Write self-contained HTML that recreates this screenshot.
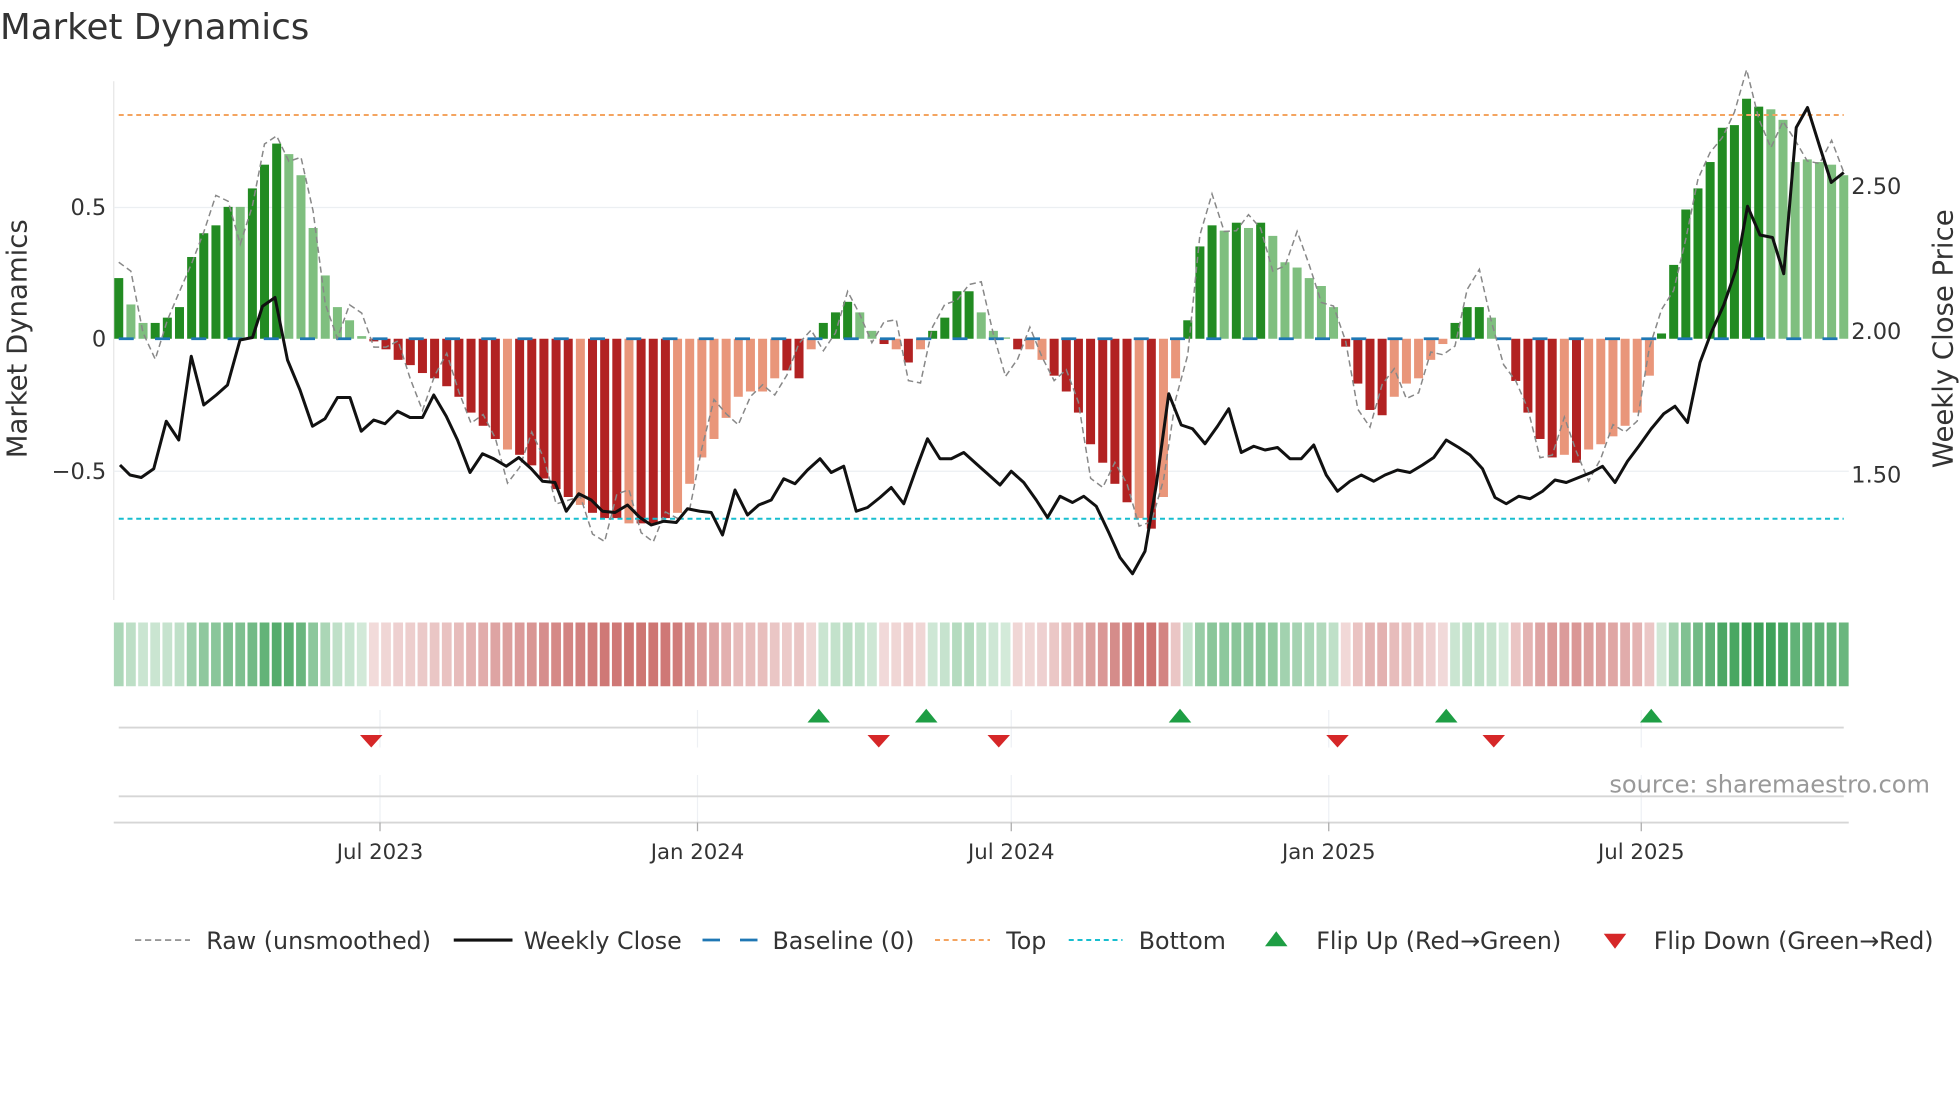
<!DOCTYPE html>
<html><head><meta charset="utf-8"><style>
html,body{margin:0;padding:0;background:#fff;width:1960px;height:1102px;overflow:hidden}
svg{display:block}
text{font-family:"DejaVu Sans","Liberation Sans",sans-serif;fill:#333}
</style></head><body>
<svg id="s" width="1960" height="1102" viewBox="0 0 1568 881.6" xmlns="http://www.w3.org/2000/svg">
<text x="0" y="31" font-size="28.5">Market Dynamics</text>
<line x1="91" y1="65" x2="91" y2="480" stroke="#e6e6e6" stroke-width="1"/>
<line x1="91" y1="166" x2="1479" y2="166" stroke="#eceff2" stroke-width="1"/>
<line x1="91" y1="377" x2="1479" y2="377" stroke="#eceff2" stroke-width="1"/>
<g id="bars"></g>
<line x1="95" y1="92" x2="1475" y2="92" stroke="#f4a460" stroke-width="1.6" stroke-dasharray="4,3"/>
<line x1="95" y1="415" x2="1475" y2="415" stroke="#17becf" stroke-width="1.6" stroke-dasharray="4,3"/>
<line x1="95" y1="271" x2="1475" y2="271" stroke="#1f77b4" stroke-width="2.2" stroke-dasharray="12,17"/>
<polyline id="raw" fill="none" stroke="#888" stroke-width="1.2" stroke-dasharray="5,3"/>
<polyline id="close" fill="none" stroke="#111" stroke-width="2.4" stroke-linejoin="round"/>
<text x="85" y="172" font-size="18" text-anchor="end">0.5</text>
<text x="85" y="277" font-size="18" text-anchor="end">0</text>
<text x="85" y="383" font-size="18" text-anchor="end">−0.5</text>
<text x="1481" y="155" font-size="18">2.50</text>
<text x="1481" y="271" font-size="18">2.00</text>
<text x="1481" y="386" font-size="18">1.50</text>
<text transform="translate(21,271) rotate(-90)" font-size="22" text-anchor="middle">Market Dynamics</text>
<text transform="translate(1562,271) rotate(-90)" font-size="22" text-anchor="middle">Weekly Close Price</text>
<g id="heat"></g>
<g stroke="#eef0f4" stroke-width="1">
<line x1="304" y1="568" x2="304" y2="598"/><line x1="558" y1="568" x2="558" y2="598"/><line x1="809" y1="568" x2="809" y2="598"/><line x1="1063" y1="568" x2="1063" y2="598"/><line x1="1313" y1="568" x2="1313" y2="598"/>
<line x1="304" y1="620" x2="304" y2="658"/><line x1="558" y1="620" x2="558" y2="658"/><line x1="809" y1="620" x2="809" y2="658"/><line x1="1063" y1="620" x2="1063" y2="658"/><line x1="1313" y1="620" x2="1313" y2="658"/>
</g>
<line x1="95" y1="582" x2="1475" y2="582" stroke="#d6d6d6" stroke-width="1.5"/>
<line x1="95" y1="637" x2="1475" y2="637" stroke="#d6d6d6" stroke-width="1.5"/>
<line x1="91" y1="658" x2="1479" y2="658" stroke="#d6d6d6" stroke-width="1.5"/>
<g stroke="#aaa" stroke-width="1"><line x1="304" y1="658" x2="304" y2="665"/><line x1="558" y1="658" x2="558" y2="665"/><line x1="809" y1="658" x2="809" y2="665"/><line x1="1063" y1="658" x2="1063" y2="665"/><line x1="1313" y1="658" x2="1313" y2="665"/></g>
<g id="flips"></g>
<text x="1544" y="634" font-size="19.3" text-anchor="end" style="fill:#999">source: sharemaestro.com</text>
<g font-size="17" text-anchor="middle">
<text x="304" y="687">Jul 2023</text><text x="558" y="687">Jan 2024</text><text x="809" y="687">Jul 2024</text><text x="1063" y="687">Jan 2025</text><text x="1313" y="687">Jul 2025</text>
</g>
<g font-size="19">
<line x1="108" y1="752" x2="152" y2="752" stroke="#888" stroke-width="1.3" stroke-dasharray="5,3"/><text x="165" y="759">Raw (unsmoothed)</text>
<line x1="363" y1="752" x2="410" y2="752" stroke="#111" stroke-width="2.5"/><text x="419" y="759">Weekly Close</text>
<line x1="562" y1="752" x2="606" y2="752" stroke="#1f77b4" stroke-width="2.2" stroke-dasharray="14,16"/><text x="618" y="759">Baseline (0)</text>
<line x1="748" y1="752" x2="792" y2="752" stroke="#f4a460" stroke-width="1.6" stroke-dasharray="4,3"/><text x="805" y="759">Top</text>
<line x1="855" y1="752" x2="898" y2="752" stroke="#17becf" stroke-width="1.6" stroke-dasharray="4,3"/><text x="911" y="759">Bottom</text>
<polygon points="1012,757 1030,757 1021,745" fill="#1e9e44"/><text x="1053" y="759">Flip Up (Red→Green)</text>
<polygon points="1283,747 1301,747 1292,759" fill="#d62728"/><text x="1323" y="759">Flip Down (Green→Red)</text>
</g>
</svg>
<script>
var D=[[.23,1],[.13,0],[.06,0],[.06,1],[.08,1],[.12,1],[.31,1],[.40,1],[.43,1],[.50,1],[.50,0],[.57,1],[.66,1],[.74,1],[.70,0],[.62,0],[.42,0],[.24,0],[.12,0],[.07,0],[.01,0],
[-.01,1],[-.04,1],[-.08,1],[-.1,1],[-.13,1],[-.15,1],[-.18,1],[-.22,1],[-.28,1],[-.33,1],[-.38,1],[-.42,0],[-.44,1],[-.48,1],[-.53,1],[-.57,1],[-.6,1],[-.63,0],[-.66,1],[-.68,1],[-.68,1],[-.7,0],[-.7,1],[-.7,1],[-.68,1],[-.66,0],[-.55,0],[-.45,0],[-.38,0],[-.3,0],[-.22,0],[-.2,0],[-.2,0],[-.15,0],[-.12,1],[-.15,1],[-.04,0],
[.06,1],[.1,1],[.14,1],[.1,0],[.03,0],
[-.02,1],[-.04,0],[-.09,1],[-.04,0],
[.03,1],[.08,1],[.18,1],[.18,1],[.1,0],[.03,0],[.005,0],
[-.04,1],[-.04,0],[-.08,0],[-.14,1],[-.2,1],[-.28,1],[-.4,1],[-.47,1],[-.55,1],[-.62,1],[-.68,0],[-.72,1],[-.6,0],[-.15,0],
[.07,1],[.35,1],[.43,1],[.41,0],[.44,1],[.42,0],[.44,1],[.39,0],[.29,0],[.27,0],[.23,0],[.2,0],[.12,0],
[-.03,1],[-.17,1],[-.27,1],[-.29,1],[-.22,0],[-.17,0],[-.15,0],[-.08,0],[-.02,0],
[.06,1],[.12,1],[.12,1],[.08,0],[.005,0],
[-.16,1],[-.28,1],[-.38,1],[-.45,1],[-.44,0],[-.47,1],[-.42,0],[-.4,0],[-.37,0],[-.33,0],[-.28,0],[-.14,0],
[.02,1],[.28,1],[.49,1],[.57,1],[.67,1],[.8,1],[.81,1],[.91,1],[.88,1],[.87,0],[.83,0],[.67,0],[.68,0],[.67,0],[.66,0],[.62,0]];
var NS="http://www.w3.org/2000/svg",N=D.length,step=(1475-95)/(N-1);
function el(t,a,p){var e=document.createElementNS(NS,t);for(var k in a)e.setAttribute(k,a[k]);p.appendChild(e);return e}
var bars=document.getElementById('bars'),heat=document.getElementById('heat'),raw=[];
for(var i=0;i<N;i++){var v=D[i][0],d=D[i][1],x=95+i*step,h=Math.abs(v)*211;
 var c=v>=0?(d?'#228b22':'#7fbf7f'):(d?'#b22222':'#e9967a');
 el('rect',{x:x-3.6,y:v>=0?271-h:271,width:7.2,height:Math.max(h,1),fill:c},bars);
 var a=v>=0?0.22+0.78*Math.min(Math.abs(v)/0.9,1):0.2+0.6*Math.min(Math.abs(v)/0.72,1);
 el('rect',{x:x-3.9,y:498,width:7.8,height:51,fill:v>=0?'#3a9f55':'#c0504d','fill-opacity':a},heat);
 var r=v+(Math.sin(i*1.7)*0.09+Math.cos(i*0.9)*0.06);raw.push(x.toFixed(1)+','+(271-r*211).toFixed(1));}
document.getElementById('raw').setAttribute('points',raw.join(' '));
var C=[96,372,104,380,113,382,123,375,133,337,143,352,153,285,163,324,173,316,182,308,192,272,202,270,210,245,220,238,230,288,240,312,250,341,260,335,270,318,280,318,289,345,299,336,308,339,318,329,328,334,338,334,347,316,357,333,366,352,376,378,386,363,395,367,405,373,415,366,425,375,434,385,444,386,453,409,463,395,473,400,482,409,492,410,502,404,512,414,521,420,531,417,541,418,550,407,560,409,569,410,578,428,588,392,598,412,607,404,617,400,627,383,636,387,646,376,656,367,665,378,675,373,685,409,694,406,704,398,713,390,723,403,733,375,742,351,752,367,761,367,771,362,781,371,790,379,800,388,809,377,819,386,829,400,838,414,848,397,858,402,867,397,877,405,887,426,896,446,906,459,916,441,925,388,935,315,945,340,954,343,964,355,974,341,983,327,993,362,1003,357,1012,360,1022,358,1032,367,1041,367,1051,356,1061,380,1070,393,1080,385,1089,380,1099,385,1108,380,1118,376,1128,378,1138,372,1147,366,1157,352,1167,358,1176,364,1186,375,1196,398,1205,403,1215,397,1224,399,1234,393,1244,384,1253,386,1263,382,1273,378,1282,373,1292,386,1302,369,1311,357,1321,343,1331,331,1340,325,1350,338,1360,290,1369,266,1379,244,1389,215,1398,165,1408,188,1418,190,1427,219,1437,102,1446,86,1456,118,1465,146,1475,138],P=[];
for(var j=0;j<C.length;j+=2)P.push(C[j]+','+C[j+1]);
document.getElementById('close').setAttribute('points',P.join(' '));
var f=document.getElementById('flips');
[655,741,944,1157,1321].forEach(function(x){el('polygon',{points:(x-9)+',578 '+(x+9)+',578 '+x+',567',fill:'#1e9e44'},f)});
[297,703,799,1070,1195].forEach(function(x){el('polygon',{points:(x-9)+',588 '+(x+9)+',588 '+x+',598',fill:'#d62728'},f)});
</script>
</body></html>
